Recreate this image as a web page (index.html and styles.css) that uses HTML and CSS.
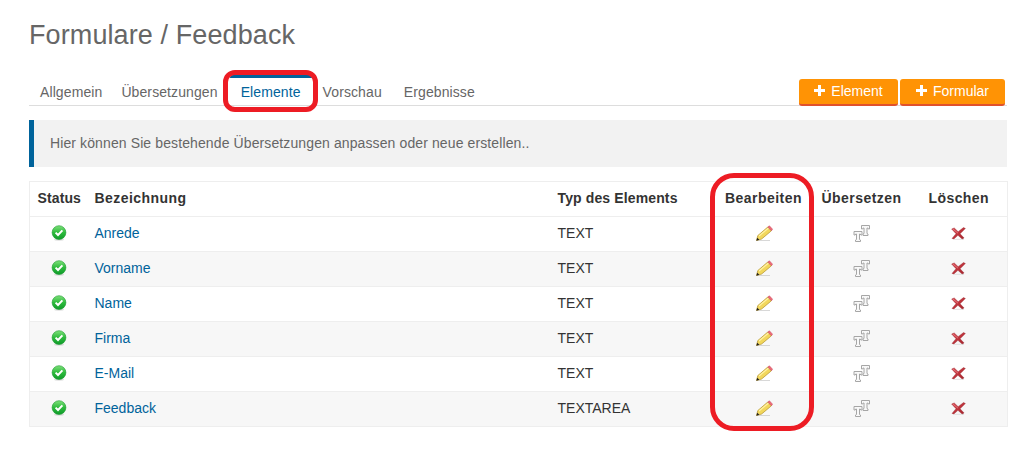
FILE: index.html
```html
<!DOCTYPE html>
<html lang="de">
<head>
<meta charset="utf-8">
<title>Formulare / Feedback</title>
<link rel="stylesheet" href="styles.css">
</head>
<body>
<svg class="defs" width="0" height="0" aria-hidden="true">
  <defs>
    <linearGradient id="grn" x1="0" y1="0" x2="0" y2="1"><stop offset="0" stop-color="#7fe07a"/><stop offset=".5" stop-color="#2dbb3c"/><stop offset="1" stop-color="#0f9a2a"/></linearGradient>
    <linearGradient id="redx" x1="0" y1="0" x2="1" y2="1"><stop offset="0" stop-color="#d9434c"/><stop offset="1" stop-color="#a3232b"/></linearGradient>
    <symbol id="ok" viewBox="0 0 16 16">
      <ellipse cx="8" cy="14.6" rx="5" ry="1.2" fill="#bbb" opacity=".5"/>
      <circle cx="8" cy="7.6" r="6.9" fill="url(#grn)" stroke="#179a2d" stroke-width=".6"/>
      <path d="M4.6 7.6 7 10 11.400 5.400" fill="none" stroke="#fff" stroke-width="2"/>
    </symbol>
    <symbol id="pen" viewBox="0 0 18 16">
      <path d="M2 15.500h13" stroke="#c8c8c8" stroke-width="1" opacity=".7"/>
      <path d="M2.800 10.600 12.800 2 16.400 5.800 6.600 14 1.500 15.500Z" fill="#f2d75c" stroke="#b08f2a" stroke-width=".7"/>
      <path d="M4 11 13.600 3" stroke="#fff2a6" stroke-width="1.200"/>
      <path d="M12.800 2 14.400.8 17.600 4.200 16.400 5.800Z" fill="#ee6a78" stroke="#c4465a" stroke-width=".5"/>
      <path d="M2.300 12.800 1.300 15.700 4.300 14.800Z" fill="#222"/>
    </symbol>
    <symbol id="tr" viewBox="0 0 18 18">
      <path d="M8.500 1.500h8v3.500h-1.200l-.5-1h-.8v5.500l1 .5v1.500h-5v-1.500l1-.5V4h-.8l-.5 1H8.500Z" fill="#f8f8f8" stroke="#a6a6a6"/>
      <path d="M1 7.500h8v3.500H7.800l-.5-1h-.8v5.500l1 .5v1.500h-5v-1.500l1-.5V10h-.8l-.5 1H1Z" fill="#f8f8f8" stroke="#a6a6a6"/>
    </symbol>
    <symbol id="del" viewBox="0 0 16 14">
      <path d="M3 13.300h11" stroke="#ccc" stroke-width="1" opacity=".6"/>
      <path d="M.6 2.200 3.400 1 7.600 5 13.400.6 15.400 1.600 9.700 7.300 14 11.800 11.900 12.900 7.400 9 3 12.900 1 12.300 5.300 7.200Z" fill="url(#redx)" stroke="#8e1f27" stroke-width=".4"/>
      <path d="M2.200 2.400 7.400 6.600" stroke="#ef8a8f" stroke-width=".8"/>
    </symbol>
  </defs>
</svg>

<main class="page">
  <h1 class="title">Formulare / Feedback</h1>

  <div class="bar">
    <nav class="tabs">
      <a class="tab">Allgemein</a>
      <a class="tab">Übersetzungen</a>
      <a class="tab active">Elemente</a>
      <a class="tab">Vorschau</a>
      <a class="tab">Ergebnisse</a>
    </nav>
    <div class="actions">
      <button class="btn"><span class="plus"></span>Element</button>
      <button class="btn wide"><span class="plus"></span>Formular</button>
    </div>
  </div>

  <p class="info">Hier können Sie bestehende Übersetzungen anpassen oder neue erstellen..</p>

  <table class="grid">
    <colgroup>
      <col class="c-status"><col class="c-name"><col class="c-type"><col class="c-act"><col class="c-act"><col class="c-del">
    </colgroup>
    <thead>
      <tr><th class="mid tight">Status</th><th>Bezeichnung</th><th class="tight">Typ des Elements</th><th class="mid">Bearbeiten</th><th class="mid">Übersetzen</th><th class="mid">Löschen</th></tr>
    </thead>
    <tbody>
      <tr><td class="mid"><svg class="i-ok"><use href="#ok"/></svg></td><td><a class="link">Anrede</a></td><td>TEXT</td><td class="mid"><svg class="i-pen"><use href="#pen"/></svg></td><td class="mid"><svg class="i-tr"><use href="#tr"/></svg></td><td class="mid"><svg class="i-del"><use href="#del"/></svg></td></tr>
      <tr><td class="mid"><svg class="i-ok"><use href="#ok"/></svg></td><td><a class="link">Vorname</a></td><td>TEXT</td><td class="mid"><svg class="i-pen"><use href="#pen"/></svg></td><td class="mid"><svg class="i-tr"><use href="#tr"/></svg></td><td class="mid"><svg class="i-del"><use href="#del"/></svg></td></tr>
      <tr><td class="mid"><svg class="i-ok"><use href="#ok"/></svg></td><td><a class="link">Name</a></td><td>TEXT</td><td class="mid"><svg class="i-pen"><use href="#pen"/></svg></td><td class="mid"><svg class="i-tr"><use href="#tr"/></svg></td><td class="mid"><svg class="i-del"><use href="#del"/></svg></td></tr>
      <tr><td class="mid"><svg class="i-ok"><use href="#ok"/></svg></td><td><a class="link">Firma</a></td><td>TEXT</td><td class="mid"><svg class="i-pen"><use href="#pen"/></svg></td><td class="mid"><svg class="i-tr"><use href="#tr"/></svg></td><td class="mid"><svg class="i-del"><use href="#del"/></svg></td></tr>
      <tr><td class="mid"><svg class="i-ok"><use href="#ok"/></svg></td><td><a class="link">E-Mail</a></td><td>TEXT</td><td class="mid"><svg class="i-pen"><use href="#pen"/></svg></td><td class="mid"><svg class="i-tr"><use href="#tr"/></svg></td><td class="mid"><svg class="i-del"><use href="#del"/></svg></td></tr>
      <tr><td class="mid"><svg class="i-ok"><use href="#ok"/></svg></td><td><a class="link">Feedback</a></td><td>TEXTAREA</td><td class="mid"><svg class="i-pen"><use href="#pen"/></svg></td><td class="mid"><svg class="i-tr"><use href="#tr"/></svg></td><td class="mid"><svg class="i-del"><use href="#del"/></svg></td></tr>
    </tbody>
  </table>

  <div class="mark mark-tab"></div>
  <div class="mark mark-col"></div>
</main>
</body>
</html>
```

FILE: styles.css
```css
* { box-sizing: border-box; }
html, body { margin: 0; background: #fff; }
body {
  font-family: "Liberation Sans", Arial, sans-serif;
  font-size: 14px;
  color: #333;
  width: 1014px;
  height: 449px;
  overflow: hidden;
}
.defs { position: absolute; }
.page { position: relative; padding: 18px 7px 0 29px; }
.title {
  margin: 0;
  font-size: 27px;
  line-height: 34px;
  font-weight: 400;
  letter-spacing: .1px;
  color: #666;
}
.bar {
  display: flex;
  justify-content: space-between;
  align-items: flex-end;
  margin-top: 24px;
  height: 30px;
  border-bottom: 1px solid #ddd;
}
.tabs { display: flex; height: 30px; }
.tab {
  display: block;
  padding: 6px 11px 0;
  line-height: 16px;
  letter-spacing: .1px;
  color: #666;
  border-top: 3px solid transparent;
}
.tab:first-child { padding-right: 8px; }
.tab.active {
  color: #00639b;
  border-top-color: #00639b;
  border-radius: 3px 3px 0 0;
  margin-left: 1px;
}
.actions { display: flex; gap: 2px; margin-right: 2px; margin-bottom: -1px; }
.btn {
  display: flex;
  align-items: center;
  justify-content: center;
  gap: 6px;
  width: 99px;
  height: 27px;
  padding: 0 0 2px;
  border: 0;
  border-bottom: 2px solid #e0512c;
  border-radius: 3px;
  background: #ff9305;
  color: #fff;
  font: 14px "Liberation Sans", Arial, sans-serif;
}
.btn.wide { width: 105px; }
.plus { position: relative; width: 11px; height: 11px; }
.plus::before, .plus::after { content: ""; position: absolute; background: #fff; }
.plus::before { left: 0; right: 0; top: 4px; height: 3px; }
.plus::after { top: 0; bottom: 0; left: 4px; width: 3px; }
.info {
  margin: 14px 0;
  height: 47px;
  padding: 0 0 0 16px;
  line-height: 47px;
  letter-spacing: .11px;
  background: #f2f2f2;
  border-left: 5px solid #00639b;
  color: #666;
}
.grid {
  width: 978px;
  table-layout: fixed;
  border-collapse: collapse;
  border: 1px solid #eee;
}
.c-status { width: 59px; }
.c-name { width: 463px; }
.c-type { width: 163px; }
.c-act { width: 98px; }
.c-del { width: 97px; }
.grid th, .grid td {
  height: 35px;
  padding: 0 6px 2px;
  text-align: left;
  border-top: 1px solid #eee;
  vertical-align: middle;
}
.grid th { font-weight: 700; color: #333; letter-spacing: .45px; white-space: nowrap; }
.grid th.tight { letter-spacing: .13px; }
.grid td { color: #333; line-height: 16px; }
.grid .mid { text-align: center; padding: 0 0 2px; }
.grid tbody tr:nth-child(even) td { background: #f7f7f7; }
.grid td svg { display: block; margin: 0 auto; }
.link { color: #00639b; }
.i-ok { width: 16px; height: 16px; }
.i-pen { width: 18px; height: 16px; }
.i-tr { width: 18px; height: 18px; }
.i-del { width: 15px; height: 13px; }
.mark {
  position: absolute;
  border: 5px solid #ed1c24;
  background: transparent;
}
.mark-tab { left: 223px; top: 70px; width: 95px; height: 42px; border-radius: 12px; }
.mark-col { left: 710px; top: 173px; width: 104px; height: 258px; border-radius: 24px; }
```
